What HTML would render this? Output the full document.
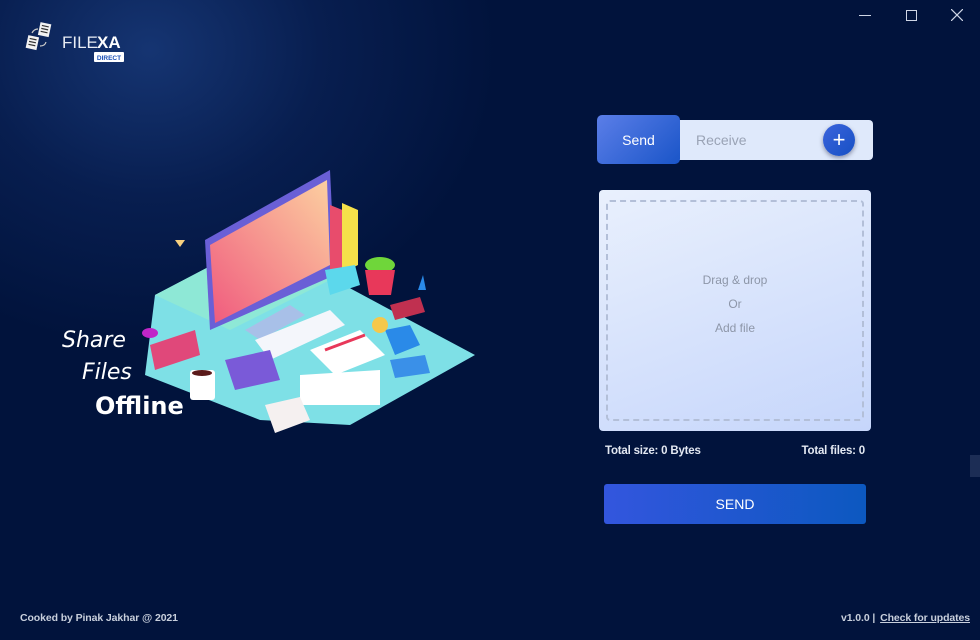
<!DOCTYPE html>
<html><head><meta charset="utf-8"><style>
*{margin:0;padding:0;box-sizing:border-box}
body{width:980px;height:640px;overflow:hidden;font-family:"Liberation Sans",Arial,sans-serif;background:#01133c;position:relative}
.glow{position:absolute;left:-200px;top:-250px;width:700px;height:600px;background:radial-gradient(ellipse at center,rgba(35,75,150,.6) 0%,rgba(20,50,115,.35) 35%,rgba(1,19,60,0) 70%)}
.abs{position:absolute}
.tabs{left:597px;top:115px;width:276px;height:49px}
.tabbar{position:absolute;left:0;top:5px;width:276px;height:40px;background:#dfe9fb;border-radius:4px}
.send{position:absolute;left:0;top:0;width:83px;height:49px;border-radius:5px;background:linear-gradient(135deg,#5b7ee8,#1a55c8);color:#fff;font-size:14px;text-align:center;line-height:50px}
.recv{position:absolute;left:99px;top:17px;color:#9aa3b5;font-size:14px}
.plus{position:absolute;left:226px;top:9px;width:32px;height:32px;border-radius:50%;background:linear-gradient(135deg,#3a63dc,#1750c4);color:#fff;font-size:22px;text-align:center;line-height:31px;box-shadow:0 2px 5px rgba(0,0,40,.4)}
.drop{left:599px;top:190px;width:272px;height:241px;background:linear-gradient(160deg,#e9f0fd,#c6d6fb);border-radius:4px}
.drop .in{position:absolute;left:7px;top:10px;width:258px;height:221px;border:2px dashed #b3bfd8;border-radius:4px;text-align:center;color:#8d96a8;font-size:12px;padding-top:66px;line-height:24px}
.info{top:445px;color:#e3e8f2;font-size:11.5px;font-weight:bold;letter-spacing:-0.2px}
.btn{left:604px;top:484px;width:262px;height:40px;border-radius:3px;background:linear-gradient(90deg,#3356de,#0c58c0);color:#fff;font-size:14px;text-align:center;line-height:40px}
.foot{top:612px;font-size:10.5px;font-weight:bold;color:#c8cfdc;letter-spacing:-0.1px}
</style></head><body>
<div class="glow"></div>
<svg class="abs" style="left:24px;top:20px" width="110" height="45">
<g transform="rotate(12 20 10)"><rect x="15" y="3" width="11" height="13" fill="#f2f2f2"/><path d="M17 6h7M17 9h7M17 12h7" stroke="#333" stroke-width="1.2"/></g>
<g transform="rotate(12 8 22)"><rect x="3" y="16" width="11" height="13" fill="#f2f2f2"/><path d="M5 19h7M5 22h7M5 25h7" stroke="#333" stroke-width="1.2"/></g>
<path d="M8 13 q2 -4 6 -4" stroke="#ccc" fill="none" stroke-width="1.2"/><path d="M22 22 q-1 4 -6 4" stroke="#ccc" fill="none" stroke-width="1.2"/>
<text x="38" y="28" fill="#e8ecf4" font-size="17" font-family="Liberation Sans">FILE</text>
<text x="73" y="28" fill="#fff" font-size="17" font-weight="bold" font-family="Liberation Sans">XA</text>
<rect x="70" y="32" width="30" height="10" rx="1" fill="#fff"/>
<text x="85" y="40" fill="#1a4fb5" font-size="6.5" font-weight="bold" text-anchor="middle" font-family="Liberation Sans">DIRECT</text>
</svg>
<div class="abs" style="left:859px;top:15px;width:12px;height:1px;background:#cfd6e6"></div>
<div class="abs" style="left:906px;top:10px;width:11px;height:11px;border:1px solid #cfd6e6"></div>
<svg class="abs" style="left:951px;top:9px" width="12" height="12"><path d="M0 0L12 12M12 0L0 12" stroke="#cfd6e6" stroke-width="1.2"/></svg>
<svg class="abs" style="left:130px;top:165px" width="360" height="275">
<defs><linearGradient id="sc" x1="0" y1="1" x2="1" y2="0"><stop offset="0" stop-color="#f05a7e"/><stop offset="1" stop-color="#fcd0a0"/></linearGradient></defs>
<polygon points="25,130 130,75 270,150 345,190 220,260 130,255 15,210" fill="#7ee0e6"/>
<polygon points="25,130 130,75 200,115 100,165" fill="#8ee8d6"/>
<polygon points="75,75 200,5 205,110 80,165" fill="#6a5fd6"/>
<polygon points="80,80 197,15 200,100 85,158" fill="url(#sc)"/>
<polygon points="200,40 225,50 225,105 200,115" fill="#e84c6c"/><polygon points="212,38 228,45 228,100 212,108" fill="#f5e14a"/>
<polygon points="195,105 225,100 230,120 200,130" fill="#5cd8ec"/>
<ellipse cx="250" cy="100" rx="15" ry="8" fill="#6fd63a"/><path d="M235 105 h30 l-4 25 h-22z" fill="#e8385a"/>
<polygon points="115,165 160,140 175,150 130,175" fill="#a8c0e8"/>
<polygon points="125,175 200,145 215,160 140,195" fill="#f4f6fb"/>
<polygon points="180,185 230,165 255,190 205,210" fill="#fff"/><path d="M195 185 l40 -15" stroke="#e8385a" stroke-width="3"/>
<polygon points="170,210 250,205 250,240 170,240" fill="#fff"/>
<polygon points="95,195 140,185 150,215 105,225" fill="#7a5ad8"/>
<polygon points="20,180 65,165 70,190 25,205" fill="#e0487a"/>
<rect x="60" y="205" width="25" height="30" rx="3" fill="#fff"/><ellipse cx="72" cy="208" rx="10" ry="3" fill="#5a1a1a"/>
<polygon points="135,240 170,232 180,255 145,268" fill="#f5f0f0"/>
<polygon points="255,165 280,160 290,180 265,190" fill="#2a8ae8"/>
<polygon points="260,195 295,190 300,208 265,213" fill="#3a90e8"/>
<polygon points="260,140 290,132 295,147 265,155" fill="#c03050"/>
<circle cx="250" cy="160" r="8" fill="#f6c84a"/>
<polygon points="45,75 55,75 50,82" fill="#f8d080"/>
<polygon points="288,125 293,110 296,125" fill="#2a8ae8"/>
<ellipse cx="20" cy="168" rx="8" ry="5" fill="#c026c8"/>
</svg>
<div class="abs" style="left:62px;top:328px;color:#fff;font-size:22px;font-family:'DejaVu Sans',sans-serif;font-style:italic;font-weight:300">Share</div>
<div class="abs" style="left:82px;top:360px;color:#fff;font-size:22px;font-family:'DejaVu Sans',sans-serif;font-style:italic">Files</div>
<div class="abs" style="left:95px;top:392px;color:#fff;font-size:24px;font-weight:bold;font-family:'DejaVu Sans',sans-serif">Offline</div>
<div class="abs tabs"><div class="tabbar"></div><div class="send">Send</div><div class="recv">Receive</div><div class="plus">+</div></div>
<div class="abs drop"><div class="in">Drag &amp; drop<br>Or<br>Add file</div></div>
<div class="abs info" style="left:605px">Total size: 0 Bytes</div>
<div class="abs info" style="right:115px">Total files: 0</div>
<div class="abs btn">SEND</div>
<div class="abs" style="left:970px;top:455px;width:10px;height:22px;background:#1c2d55"></div>
<div class="abs foot" style="left:20px">Cooked by Pinak Jakhar @ 2021</div>
<div class="abs foot" style="right:10px">v1.0.0 | <span style="text-decoration:underline;margin-left:2px">Check for updates</span></div>
</body></html>
